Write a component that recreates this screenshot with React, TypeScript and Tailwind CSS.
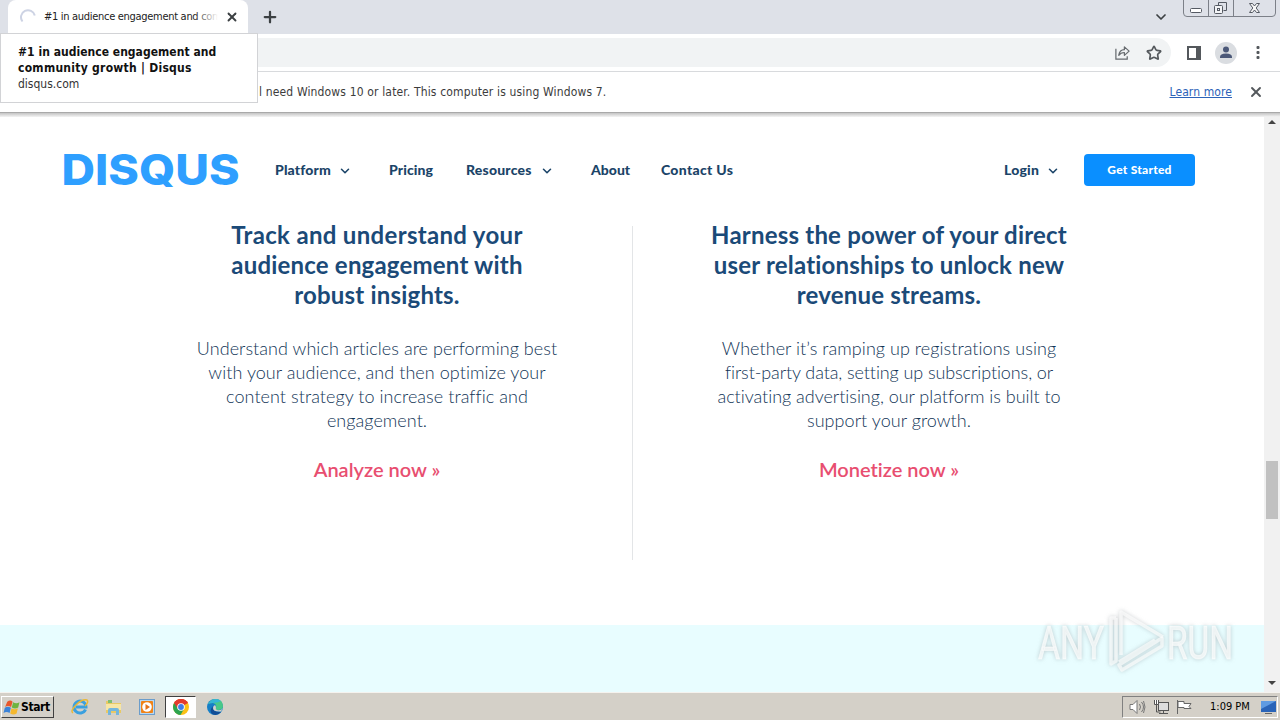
import { ChevronDown, Plus, Star, X } from "lucide-react";

function Tooltip() {
  return (
    <div className="absolute left-0 top-[33px] z-20 h-[70px] w-[258px] border border-[#d2d3d6] bg-white pl-[17px] pt-[10px] font-['DejaVu_Sans_Condensed','DejaVu_Sans',sans-serif] text-[12px] leading-4 text-[#111] whitespace-nowrap">
      <p className="font-bold tracking-[0.03px]">#1 in audience engagement and</p>
      <p className="font-bold tracking-[0.27px]">community growth | Disqus</p>
      <p className="text-[#333]">disqus.com</p>
    </div>
  );
}

function WindowButtons() {
  return (
    <svg className="ml-[14px] h-[17px] w-[94px]" viewBox="0 0 94 17" fill="none" stroke="#7c8088">
      <path d="M.5 0v13q0 3.500 3.500 3.500h85q3.500 0 3.500-3.500V0M25.500 0v16M50.500 0v16" />
      <rect x="7.500" y="8.500" width="11" height="4" rx="1" stroke="#555a63" fill="#fff" />
      <path d="M35.500 5.500v-3h8v8h-3" stroke="#555a63" />
      <rect x="31.500" y="5.500" width="8" height="8" rx="1" stroke="#555a63" fill="#f3f4f6" />
      <rect x="34.500" y="8.500" width="2" height="2" stroke="#555a63" />
      <path d="M66.500 3.500h3l2 2.500 2-2.500h3l-3.300 4.500 3.300 4.500h-3l-2-2.500-2 2.500h-3L69.800 8z" stroke="#555a63" fill="#f7f7f7" />
    </svg>
  );
}

function TabStrip() {
  return (
    <div className="flex h-[34px] bg-[#dee1e8]">
      <div className="ml-2 flex h-[34px] w-[240px] items-center rounded-t-lg bg-white pl-3">
        <svg className="size-4" viewBox="0 0 16 16" fill="none" stroke="#cdd3e4" strokeWidth="2">
          <path d="M2.500 12.500A7 7 0 1 1 14.800 6.500" />
        </svg>
        <div className="relative ml-2 w-[174px] overflow-hidden whitespace-nowrap font-['DejaVu_Sans_Condensed','DejaVu_Sans',sans-serif] text-[11px] tracking-[-0.3px] text-[#222]">
          #1 in audience engagement and com
          <div className="absolute inset-y-0 right-0 w-6 bg-linear-to-r from-transparent to-white" />
        </div>
        <X className="ml-[7px] size-[14px] text-[#3c4043]" strokeWidth={3.2} />
      </div>
      <Plus className="ml-[13px] mt-[8px] size-[18px] text-[#3c4043]" strokeWidth={3} />
      <div className="grow" />
      <ChevronDown className="mt-[9px] size-4 text-[#3c4043]" strokeWidth={2.6} />
      <WindowButtons />
      <div className="w-[3px]" />
    </div>
  );
}

function Toolbar() {
  return (
    <div className="flex h-[38px] items-center border-b border-[#d8dadd] bg-white">
      <div className="flex h-[29px] w-[1171px] items-center justify-end gap-[15px] rounded-r-full bg-[#f1f3f4] pr-[9px]">
        <svg className="size-[17px]" viewBox="0 0 18 18" fill="none" stroke="#666a6e" strokeWidth="1.300">
          <path d="M2 5v11h12v-3" />
          <path d="M5 12q1-6 6-6V3l5 4.500-5 4.500V9q-4 0-6 3z" strokeLinejoin="round" />
        </svg>
        <Star className="size-[16px] text-[#54585c]" strokeWidth={2.5} />
      </div>
      <svg className="ml-[16px] size-[14px]" viewBox="0 0 14 14" fill="none">
        <rect x="1" y="1" width="12" height="12" stroke="#54585c" strokeWidth="2" />
        <path d="M9 1h5v12H9z" fill="#54585c" />
      </svg>
      <svg className="ml-[14px] size-[22px]" viewBox="0 0 22 22">
        <circle cx="11" cy="11" r="11" fill="#dadde1" />
        <circle cx="11" cy="7.500" r="3" fill="#4b5878" />
        <path d="M5 16v-1q0-3.500 6-3.500t6 3.500v1z" fill="#4b5878" />
      </svg>
      <svg className="ml-[19px] h-4 w-1" viewBox="0 0 4 16" fill="#54585c">
        <rect x=".5" y="1" width="3" height="3" rx="1" />
        <rect x=".5" y="6" width="3" height="3" rx="1" />
        <rect x=".5" y="11" width="3" height="3" rx="1" />
      </svg>
    </div>
  );
}

function InfoBar() {
  return (
    <div className="flex h-[41px] items-center border-b border-[#a9a9a9] bg-white pb-px pl-[259px] font-['DejaVu_Sans_Condensed','DejaVu_Sans',sans-serif] text-[12px] text-[#3c3c3c]">
      <span className="whitespace-nowrap tracking-[0.15px]">l need Windows 10 or later. This computer is using Windows 7.</span>
      <span className="ml-auto tracking-[0.1px] text-[#2c62b8] underline">Learn more</span>
      <X className="ml-[16px] mr-[16px] size-4 text-[#54585c]" strokeWidth={2.8} />
    </div>
  );
}

function Logo() {
  return (
    <svg className="h-[40px] w-[178px] overflow-visible" viewBox="0 0 178 40">
      <text x="-.5" y="34.500" textLength="178" lengthAdjust="spacingAndGlyphs" className="fill-[#2e9fff] font-['Inter',sans-serif] text-[42px] font-extrabold">
        DISQUS
      </text>
    </svg>
  );
}

function SiteHeader() {
  return (
    <header className="flex h-[64px] items-center pl-[62px] pt-[2px] font-['Lato',sans-serif] text-[14px] font-black text-[#1b4468] whitespace-nowrap">
      <Logo />
      <nav className="ml-[35px] flex items-center pb-[2px]">
        <a className="w-[63px] tracking-[0.15px]">Platform</a>
        <ChevronDown className="mr-[37px] mt-[3px] size-[14px]" strokeWidth={2.7} />
        <a className="w-[77px] tracking-[0.1px]">Pricing</a>
        <a className="w-[74px] tracking-[0.2px]">Resources</a>
        <ChevronDown className="mr-[37px] mt-[3px] size-[14px]" strokeWidth={2.7} />
        <a className="w-[70px]">About</a>
        <a className="tracking-[0.3px]">Contact Us</a>
      </nav>
      <div className="ml-auto flex items-center pr-[69px]">
        <a className="w-[42px] pb-[2px] tracking-[0.2px]">Login</a>
        <ChevronDown className="mt-px size-[14px]" strokeWidth={2.7} />
        <a className="ml-[24px] flex h-8 w-[111px] items-center justify-center rounded-[4px] bg-[#0a8fff] text-[12px] tracking-[0.25px] text-white">Get Started</a>
      </div>
    </header>
  );
}

function Feature({ title, body, link }: { title: React.ReactNode; body: React.ReactNode; link: string }) {
  return (
    <section className="flex w-[512px] flex-col items-center text-center font-['Lato',sans-serif] whitespace-nowrap">
      <h3 className="text-[24px] font-bold leading-[30px] tracking-[0.2px] text-[#1b4a78]">{title}</h3>
      <p className="mt-[26px] text-[18px] font-light leading-6 tracking-[0.05px] text-[#123557]">{body}</p>
      <a className="mt-[25px] text-[20px] font-semibold leading-6 text-[#e84e70] [font-variant-ligatures:none]">{link}</a>
    </section>
  );
}

function Features() {
  return (
    <div className="flex h-[440px] pl-[121px] pt-[35px]">
      <Feature
        title={
          <>
            <span className="block tracking-[0.32px]">Track and understand your</span>
            <span className="block">audience engagement with</span>
            <span className="block">robust insights.</span>
          </>
        }
        body={
          <>
            <span className="block">Understand which articles are performing best</span>
            <span className="block">with your audience, and then optimize your</span>
            <span className="block">content strategy to increase traffic and</span>
            <span className="block">engagement.</span>
          </>
        }
        link="Analyze now »"
      />
      <div className="-ml-px mt-[6px] h-[334px] w-px bg-[#e3e5e7]" />
      <Feature
        title={
          <>
            <span className="block">Harness the power of your direct</span>
            <span className="block">user relationships to unlock new</span>
            <span className="block">revenue streams.</span>
          </>
        }
        body={
          <>
            <span className="block">Whether it’s ramping up registrations using</span>
            <span className="block tracking-[-0.1px]">first-party data, setting up subscriptions, or</span>
            <span className="block tracking-[-0.03px]">activating advertising, our platform is built to</span>
            <span className="block">support your growth.</span>
          </>
        }
        link="Monetize now »"
      />
    </div>
  );
}

function Scrollbar() {
  return (
    <div className="flex w-4 flex-col items-center bg-[#f1f1f1]">
      <svg className="mt-[2px] h-[6px] w-2" viewBox="0 0 8 6" fill="#444">
        <path d="M0 5l4-4 4 4z" />
      </svg>
      <div className="mt-[336px] h-[58px] w-3 bg-[#c1c1c1]" />
      <svg className="mb-[6px] mt-auto h-[6px] w-2" viewBox="0 0 8 6" fill="#444">
        <path d="M0 1l4 4 4-4z" />
      </svg>
    </div>
  );
}

function Watermark() {
  return (
    <svg className="absolute left-[1030px] top-[600px] h-[80px] w-[210px] overflow-visible drop-shadow-[0_0_2px_rgba(120,130,135,0.55)]" viewBox="0 0 210 80">
      <g className="fill-white/70 stroke-white/50 font-['Roboto',sans-serif] text-[46px]">
        <text x="8" y="59" textLength="66" lengthAdjust="spacingAndGlyphs">ANY</text>
        <text x="137" y="59" textLength="66" lengthAdjust="spacingAndGlyphs">RUN</text>
      </g>
      <g fill="none" stroke="#fff" strokeOpacity=".65" strokeWidth="3.500" strokeLinejoin="round">
        <path d="M91 55V12l42 25" />
        <path d="M86 18h-5v46l5-3V18" />
        <path d="M89 62l36-22M92 70l40-24v-8L89 65z" />
      </g>
    </svg>
  );
}

function Taskbar() {
  return (
    <div className="flex h-[28px] items-center border-t border-[#f5f3ef] bg-[#d4d0c8] pt-px font-['DejaVu_Sans_Condensed','DejaVu_Sans',sans-serif] text-[11px] text-black">
      <div className="ml-px flex h-[22px] w-[53px] items-center border border-b-[#404040] border-l-white border-r-[#404040] border-t-white pl-[1px] text-[12px] font-bold tracking-[-0.4px]">
        <svg className="mr-px size-[17px] shrink-0" viewBox="0 0 16 16">
          <path d="M4 2.500q3-2 5 0L7.600 7.500q-3-2-5.600 0z" fill="#e8572b" />
          <path d="M9.500 3q3 2 6 0l-1.200 5q-3 2-6 0z" fill="#6fb43f" />
          <path d="M1.700 8.200q3-2 5.700 0l-1.200 5q-3-2-5.700 0z" fill="#3b83d8" />
          <path d="M8 8.700q3 2 6 0l-1.200 5q-3 2-6 0z" fill="#f4b82e" />
        </svg>
        Start
      </div>
      <svg className="ml-[17px] size-[18px]" viewBox="0 0 18 18" fill="none">
        <path d="M14.500 11.500A6 6 0 1 1 15 9H5" stroke="#3aa0df" strokeWidth="3" />
        <path d="M2 15Q-1 13 5 7t11-5q2 2-2 6" stroke="#e9b836" strokeWidth="1.500" />
      </svg>
      <svg className="ml-[16px] size-[17px]" viewBox="0 0 17 17">
        <path d="M1 2h5l1 2h9v10H1z" fill="#e9c964" />
        <path d="M3 1h4v3H3z" fill="#7fbe70" />
        <path d="M1 5h15v6H1z" fill="#f7e6a5" />
        <path d="M3 16v-5q0-2 2-2h7q2 0 2 2v5h-3v-4H6v4z" fill="#74b6dc" />
      </svg>
      <svg className="ml-[17px] size-4" viewBox="0 0 16 16">
        <rect x=".5" y=".5" width="15" height="15" fill="#b8d8f2" stroke="#6b9dcb" />
        <rect x="2" y="2" width="12" height="12" rx="1" fill="#f08317" />
        <circle cx="8" cy="8" r="4.800" fill="#fff" />
        <path d="M6.500 5l4.500 3-4.500 3z" fill="#e3731a" />
      </svg>
      <div className="ml-[10px] flex h-[22px] w-[31px] items-center justify-center border border-b-white border-l-[#404040] border-r-white border-t-[#404040] bg-white">
        <svg className="size-4" viewBox="0 0 16 16">
          <circle cx="8" cy="8" r="8" fill="#fbc116" />
          <path d="M8 8L1.100 4A8 8 0 0 1 14.900 4z" fill="#e33b2e" />
          <path d="M1.100 4A8 8 0 0 0 7.500 16L11 10 8 8z" fill="#2da44f" />
          <path d="M1.100 4L5 10l3-6h6.900A8 8 0 0 0 1.100 4z" fill="#e33b2e" />
          <circle cx="8" cy="8" r="3.800" fill="#fff" />
          <circle cx="8" cy="8" r="2.900" fill="#3f7de8" />
        </svg>
      </div>
      <svg className="ml-[11px] size-4" viewBox="0 0 16 16">
        <circle cx="8" cy="8" r="8" fill="#167fc7" />
        <path d="M1 5Q4 0 9 0q7 1 7 7 0 4-5 4-3 0-2-2 1-4-3-5-3 0-5 1z" fill="#48c889" />
        <path d="M1 5Q4 0 9 0q3 0 5 2-4 2-8 2-3 0-5 1z" fill="#35b5d5" />
        <path d="M6 7q-2 6 8 6-3 4-8 2.500Q1 12 6 7z" fill="#124d96" />
        <path d="M16 9q-2 3-6 2-2-1-1-2 0-2-1-3-2 1-2 3 0 4 8 3.500z" fill="#d4d0c8" />
      </svg>
      <div className="ml-auto mr-[2px] flex h-[22px] w-[156px] items-center border border-b-white border-l-[#808080] border-r-white border-t-[#808080] pl-[6px]">
        <svg className="h-4 w-[17px]" viewBox="0 0 17 16" fill="none" stroke="#777">
          <path d="M1 5.500h3l4-4v13l-4-4H1z" fill="#fff" />
          <path d="M10.500 5q2 3 0 6M12.500 3q4 5 0 10M14.500 2q3 6 0 12" />
        </svg>
        <svg className="ml-[7px] size-4" viewBox="0 0 16 16" fill="none" stroke="#555">
          <rect x="5.500" y="3.500" width="10" height="8" fill="#ddd" />
          <path d="M3.500 5v8h4M6 14.500h9M10.500 12v2" />
          <path d="M1.500 1v4.500h4V1M3.500 1v4" fill="#fff" />
        </svg>
        <svg className="ml-[7px] size-4" viewBox="0 0 16 16" stroke="#666" fill="#fff">
          <path d="M1.500 1v14M2 2.500h6v2h7l-2 3 2 2H8v-1H2z" />
        </svg>
        <span className="ml-[18px] whitespace-nowrap">1:09 PM</span>
        <svg className="ml-auto mr-[1px] h-[13px] w-[15px]" viewBox="0 0 15 13">
          <rect width="15" height="11" fill="#2a64b8" />
          <path d="M0 0h15L0 8z" fill="#5f9be2" />
          <path d="M4 12h7v1H4z" fill="#666" />
        </svg>
      </div>
    </div>
  );
}

export default function App() {
  return (
    <div className="relative flex h-[720px] w-[1280px] flex-col overflow-hidden bg-white">
      <TabStrip />
      <Toolbar />
      <InfoBar />
      <div className="h-[4px] bg-linear-to-b from-[#c4c4c4] to-[#f4f4f4]" />
      <div className="flex h-[575px]">
        <main className="w-[1264px] bg-white">
          <div className="h-[68px] pt-[20px]">
            <SiteHeader />
          </div>
          <Features />
          <div className="h-[67px] bg-[#e8fdff]" />
        </main>
        <Scrollbar />
      </div>
      <Taskbar />
      <Tooltip />
      <Watermark />
    </div>
  );
}
